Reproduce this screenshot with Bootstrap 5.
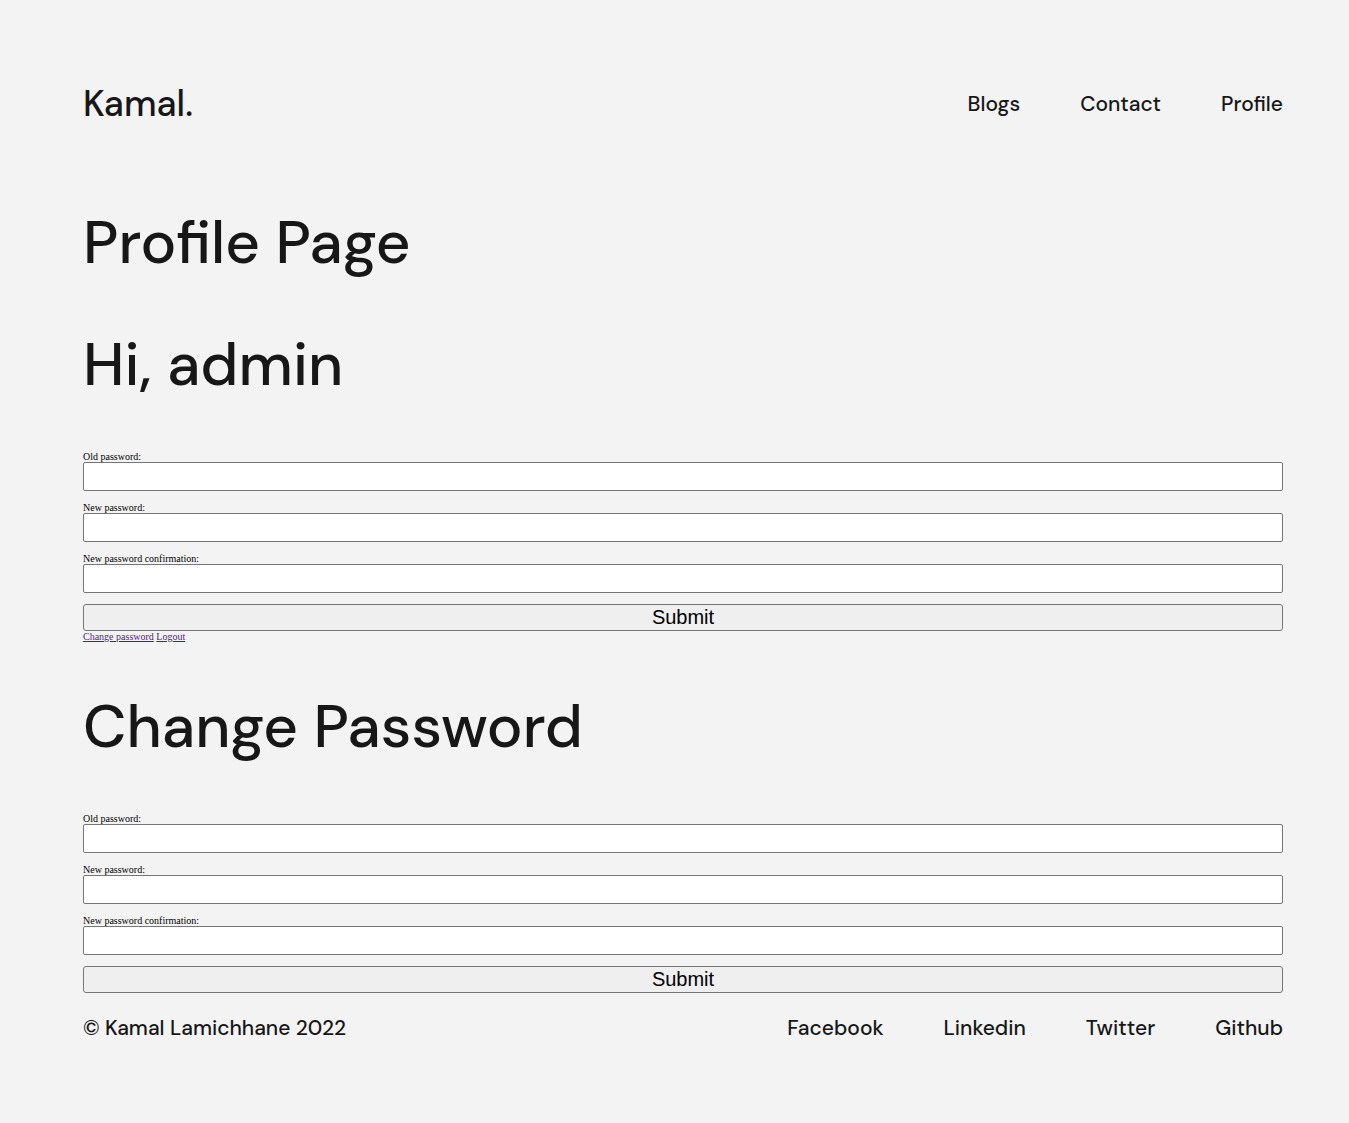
<!DOCTYPE html>
<html lang="en">
<head>
<meta charset="utf-8">
<meta name="viewport" content="width=device-width, initial-scale=1">
<title>Profile Page</title>
<link href="https://cdn.jsdelivr.net/npm/bootstrap@5.3.0/dist/css/bootstrap.min.css" rel="stylesheet">
<style>
body { background: #f3f3f3; color: #000; font: 10px/11px "Liberation Serif", serif; }
.page-shell { padding: 80px 66px 70px 83px; }
.site-bar { min-height: 48px; font: 500 21px/28px "DM Sans", Inter, sans-serif; font-optical-sizing: none; color: #171717; }
.site-bar a { color: inherit; text-decoration: none; }
.site-bar ul { column-gap: 60px; }
.site-bar .brand { font-size: 36px; line-height: 48px; font-optical-sizing: auto; }
.page-title { font: 500 60px/76px "DM Sans", Inter, sans-serif; color: #171717; margin: 46px 0; }
.site-bar + main .page-title:first-child { margin-top: 77px; }
.pw-form { margin-top: 48px; }
.pw-form label { display: block; }
.pw-form input { display: block; width: 100%; height: 29px; padding: 1px 2px; margin-bottom: 11px; border: 1px solid #767676; border-radius: 2px; background: #fff; font: 20px/23px "Liberation Sans", sans-serif; }
.pw-form button { display: block; width: 100%; height: 27px; padding: 1px 6px; border: 1px solid #767676; border-radius: 3px; background: #efefef; color: #000; font: 20px/23px "Liberation Sans", sans-serif; }
.account-links { margin-bottom: 47px; }
.account-links a { color: #551a8b; text-decoration: underline; }
.site-foot { margin-top: 11px; }
</style>
<script defer src="https://cdn.jsdelivr.net/npm/bootstrap@5.3.0/dist/js/bootstrap.bundle.min.js"></script>
</head>
<body>
<div class="container-fluid page-shell">
  <header class="site-bar d-flex flex-wrap justify-content-between align-items-center">
    <a class="brand" href="#">Kamal.</a>
    <nav aria-label="Main">
      <ul class="list-unstyled d-flex flex-wrap mb-0">
        <li><a href="#">Blogs</a></li>
        <li><a href="#">Contact</a></li>
        <li><a href="#">Profile</a></li>
      </ul>
    </nav>
  </header>
  <main>
    <h1 class="page-title">Profile Page</h1>
    <h1 class="page-title">Hi, admin</h1>
    <form class="pw-form">
      <label for="old1">Old password:</label>
      <input type="password" id="old1">
      <label for="new1">New password:</label>
      <input type="password" id="new1">
      <label for="confirm1">New password confirmation:</label>
      <input type="password" id="confirm1">
      <button type="submit">Submit</button>
    </form>
    <div class="account-links"><a href="#">Change password</a> <a href="#">Logout</a></div>
    <h1 class="page-title">Change Password</h1>
    <form class="pw-form">
      <label for="old2">Old password:</label>
      <input type="password" id="old2">
      <label for="new2">New password:</label>
      <input type="password" id="new2">
      <label for="confirm2">New password confirmation:</label>
      <input type="password" id="confirm2">
      <button type="submit">Submit</button>
    </form>
  </main>
  <footer class="site-bar site-foot d-flex flex-wrap justify-content-between align-items-center">
    <span>© Kamal Lamichhane 2022</span>
    <ul class="list-unstyled d-flex flex-wrap mb-0">
      <li><a href="#">Facebook</a></li>
      <li><a href="#">Linkedin</a></li>
      <li><a href="#">Twitter</a></li>
      <li><a href="#">Github</a></li>
    </ul>
  </footer>
</div>
</body>
</html>
